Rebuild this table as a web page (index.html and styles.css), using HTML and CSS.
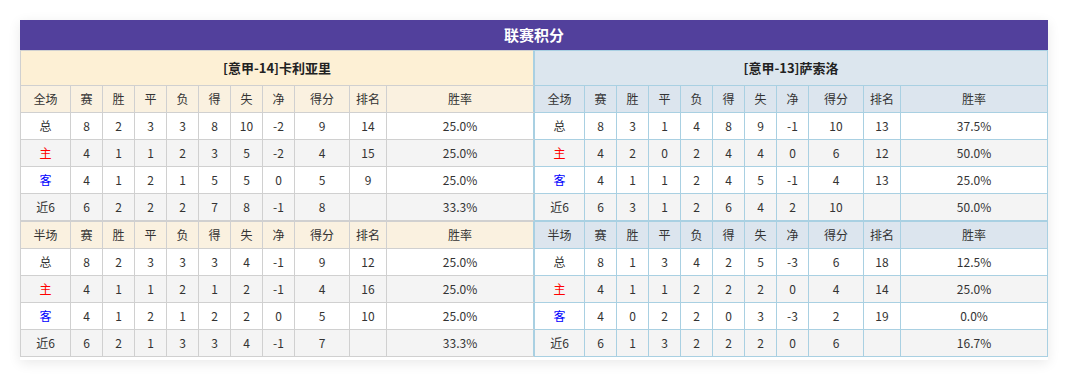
FILE: index.html
```html
<!DOCTYPE html>
<html lang="zh">
<head>
<meta charset="utf-8">
<title>联赛积分</title>
<link rel="stylesheet" href="styles.css">
</head>
<body>
<div class="panel">
  <div class="panel-title">联赛积分</div>
  <div class="sides">
    <div class="side side-home">
      <table class="stats">
        <colgroup><col class="c-label"><col class="c-n"><col class="c-n"><col class="c-n"><col class="c-n"><col class="c-n"><col class="c-n"><col class="c-n"><col class="c-pts"><col class="c-rank"><col class="c-rate"></colgroup>
        <tr class="team"><td colspan="11">[意甲-14]卡利亚里</td></tr>
        <tr class="head"><td>全场</td><td>赛</td><td>胜</td><td>平</td><td>负</td><td>得</td><td>失</td><td>净</td><td>得分</td><td>排名</td><td>胜率</td></tr>
        <tr><td>总</td><td>8</td><td>2</td><td>3</td><td>3</td><td>8</td><td>10</td><td>-2</td><td>9</td><td>14</td><td>25.0%</td></tr>
        <tr class="alt"><td class="red">主</td><td>4</td><td>1</td><td>1</td><td>2</td><td>3</td><td>5</td><td>-2</td><td>4</td><td>15</td><td>25.0%</td></tr>
        <tr><td class="blue">客</td><td>4</td><td>1</td><td>2</td><td>1</td><td>5</td><td>5</td><td>0</td><td>5</td><td>9</td><td>25.0%</td></tr>
        <tr class="alt"><td>近6</td><td>6</td><td>2</td><td>2</td><td>2</td><td>7</td><td>8</td><td>-1</td><td>8</td><td></td><td>33.3%</td></tr>
      </table>
      <table class="stats">
        <colgroup><col class="c-label"><col class="c-n"><col class="c-n"><col class="c-n"><col class="c-n"><col class="c-n"><col class="c-n"><col class="c-n"><col class="c-pts"><col class="c-rank"><col class="c-rate"></colgroup>
        <tr class="head"><td>半场</td><td>赛</td><td>胜</td><td>平</td><td>负</td><td>得</td><td>失</td><td>净</td><td>得分</td><td>排名</td><td>胜率</td></tr>
        <tr><td>总</td><td>8</td><td>2</td><td>3</td><td>3</td><td>3</td><td>4</td><td>-1</td><td>9</td><td>12</td><td>25.0%</td></tr>
        <tr class="alt"><td class="red">主</td><td>4</td><td>1</td><td>1</td><td>2</td><td>1</td><td>2</td><td>-1</td><td>4</td><td>16</td><td>25.0%</td></tr>
        <tr><td class="blue">客</td><td>4</td><td>1</td><td>2</td><td>1</td><td>2</td><td>2</td><td>0</td><td>5</td><td>10</td><td>25.0%</td></tr>
        <tr class="alt"><td>近6</td><td>6</td><td>2</td><td>1</td><td>3</td><td>3</td><td>4</td><td>-1</td><td>7</td><td></td><td>33.3%</td></tr>
      </table>
    </div>
    <div class="side side-away">
      <table class="stats">
        <colgroup><col class="c-label"><col class="c-n"><col class="c-n"><col class="c-n"><col class="c-n"><col class="c-n"><col class="c-n"><col class="c-n"><col class="c-pts"><col class="c-rank"><col class="c-rate"></colgroup>
        <tr class="team"><td colspan="11">[意甲-13]萨索洛</td></tr>
        <tr class="head"><td>全场</td><td>赛</td><td>胜</td><td>平</td><td>负</td><td>得</td><td>失</td><td>净</td><td>得分</td><td>排名</td><td>胜率</td></tr>
        <tr><td>总</td><td>8</td><td>3</td><td>1</td><td>4</td><td>8</td><td>9</td><td>-1</td><td>10</td><td>13</td><td>37.5%</td></tr>
        <tr class="alt"><td class="red">主</td><td>4</td><td>2</td><td>0</td><td>2</td><td>4</td><td>4</td><td>0</td><td>6</td><td>12</td><td>50.0%</td></tr>
        <tr><td class="blue">客</td><td>4</td><td>1</td><td>1</td><td>2</td><td>4</td><td>5</td><td>-1</td><td>4</td><td>13</td><td>25.0%</td></tr>
        <tr class="alt"><td>近6</td><td>6</td><td>3</td><td>1</td><td>2</td><td>6</td><td>4</td><td>2</td><td>10</td><td></td><td>50.0%</td></tr>
      </table>
      <table class="stats">
        <colgroup><col class="c-label"><col class="c-n"><col class="c-n"><col class="c-n"><col class="c-n"><col class="c-n"><col class="c-n"><col class="c-n"><col class="c-pts"><col class="c-rank"><col class="c-rate"></colgroup>
        <tr class="head"><td>半场</td><td>赛</td><td>胜</td><td>平</td><td>负</td><td>得</td><td>失</td><td>净</td><td>得分</td><td>排名</td><td>胜率</td></tr>
        <tr><td>总</td><td>8</td><td>1</td><td>3</td><td>4</td><td>2</td><td>5</td><td>-3</td><td>6</td><td>18</td><td>12.5%</td></tr>
        <tr class="alt"><td class="red">主</td><td>4</td><td>1</td><td>1</td><td>2</td><td>2</td><td>2</td><td>0</td><td>4</td><td>14</td><td>25.0%</td></tr>
        <tr><td class="blue">客</td><td>4</td><td>0</td><td>2</td><td>2</td><td>0</td><td>3</td><td>-3</td><td>2</td><td>19</td><td>0.0%</td></tr>
        <tr class="alt"><td>近6</td><td>6</td><td>1</td><td>3</td><td>2</td><td>2</td><td>2</td><td>0</td><td>6</td><td></td><td>16.7%</td></tr>
      </table>
    </div>
  </div>
</div>
</body>
</html>
```

FILE: styles.css
```css
html, body {
  margin: 0;
  padding: 0;
  background: #fff;
}

body {
  padding: 20px;
  font-family: "Microsoft YaHei", "Noto Sans CJK SC", sans-serif;
  font-size: 12px;
  color: #333;
}

.panel {
  width: 1028px;
  padding-bottom: 3px;
  background: #fff;
  box-shadow: 0 3px 12px rgba(0, 0, 0, 0.09);
}

.panel-title {
  height: 30px;
  line-height: 30px;
  background: #52409c;
  color: #fff;
  font-size: 15px;
  font-weight: bold;
  text-align: center;
}

.sides {
  display: flex;
}

.side {
  width: 514px;
  display: flex;
  flex-direction: column;
}

.stats {
  width: 100%;
  border-collapse: collapse;
  table-layout: fixed;
}

.stats td {
  height: 26px;
  padding: 0;
  line-height: 26px;
  text-align: center;
  white-space: nowrap;
}

.c-label { width: 50px; }
.c-n { width: 32px; }
.c-pts { width: 55px; }
.c-rank { width: 37px; }

.stats .team td {
  height: 34px;
  line-height: 34px;
  font-size: 13px;
  font-weight: bold;
  color: #222;
}

.stats .alt td {
  background: #f4f4f4;
}

.side-home .stats td {
  border: 1px solid #d0d0d0;
}

.side-home .stats td:last-child {
  border-right-color: #a9d0e2;
}

.side-home .team td {
  background: #fdf0d5;
}

.side-home .head td {
  background: #faf1e0;
}

.side-away .stats td {
  border: 1px solid #a9d0e2;
}

.side-away .team td {
  background: #dce6ee;
}

.side-away .head td {
  background: #dce5ee;
}

.red { color: #f00; }
.blue { color: #00f; }
```
